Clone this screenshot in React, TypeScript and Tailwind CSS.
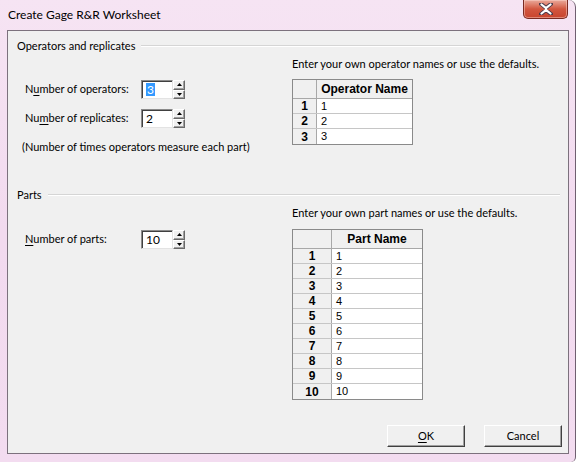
import React from "react";

const ui = "font-['Segoe_UI','Lato','DejaVu_Sans',sans-serif]";
const gridFont = "font-['Tahoma','Liberation_Sans','DejaVu_Sans',sans-serif]";

function Mnemonic({ before, ch, after }: { before: string; ch: string; after: string }) {
  return (
    <span className="whitespace-nowrap">
      {before}
      <span className="underline underline-offset-2">{ch}</span>
      {after}
    </span>
  );
}

function Arrow({ up }: { up: boolean }) {
  return (
    <svg width="5" height="3" viewBox="0 0 5 3" className="block">
      {up ? <path d="M0 3 L2.5 0 L5 3 Z" fill="#000" /> : <path d="M0 0 L2.5 3 L5 0 Z" fill="#000" />}
    </svg>
  );
}

function SpinButton({ up }: { up: boolean }) {
  return (
    <div className="flex-1 flex items-center justify-center bg-[#f0f0f0] border-t border-l border-t-white border-l-white border-r border-b border-r-[#696969] border-b-[#696969] shadow-[inset_-1px_-1px_0_#a0a0a0]">
      <Arrow up={up} />
    </div>
  );
}

function Spin({ value, selected }: { value: string; selected?: boolean }) {
  return (
    <div className="flex h-[19px]">
      <div className="w-[32px] h-[19px] bg-white border border-t-[#8a8a8a] border-l-[#8a8a8a] border-r-[#e3e3e3] border-b-[#e3e3e3] shadow-[inset_1px_1px_0_#404040] flex items-center pl-[4px] text-[12px]">
        {selected ? (
          <span className="bg-[#3399ff] text-white leading-[13px] px-[1px]">{value}</span>
        ) : (
          <span className="leading-[13px]">{value}</span>
        )}
      </div>
      <div className="w-[12px] h-[19px] flex flex-col">
        <SpinButton up />
        <SpinButton up={false} />
      </div>
    </div>
  );
}

function GroupHeader({ title }: { title: string }) {
  return (
    <div className="h-[16px] flex items-center pl-[9px] pr-[8px]">
      <span className="leading-[16px] whitespace-nowrap">{title}</span>
      <div className="flex-1 ml-[6px] h-[2px] border-t border-b border-t-[#d5d5d5] border-b-white" />
    </div>
  );
}

function NameGrid({
  header,
  rows,
  keyClass,
  valClass,
}: {
  header: string;
  rows: string[];
  keyClass: string;
  valClass: string;
}) {
  return (
    <div className={`w-fit border border-[#8a8a8a] bg-white ${gridFont} text-[11px]`}>
      <div className="flex h-[19px] border-b border-[#a8a8a8]">
        <div className={`${keyClass} bg-[#f0f0f0] border-r border-[#a8a8a8]`} />
        <div className={`${valClass} bg-[#f0f0f0] flex items-center justify-center font-bold text-[12px]`}>
          {header}
        </div>
      </div>
      {rows.map((r, i) => (
        <div
          key={r}
          className={`flex h-[15px] ${i < rows.length - 1 ? "border-b border-[#c6c6c6]" : ""}`}
        >
          <div
            className={`${keyClass} bg-[#f0f0f0] border-r border-[#a8a8a8] flex items-center justify-center font-bold text-[12px]`}
          >
            {i + 1}
          </div>
          <div className={`${valClass} flex items-center pl-[4px] text-[11px]`}>{r}</div>
        </div>
      ))}
    </div>
  );
}

function ClassicButton({ children }: { children: React.ReactNode }) {
  return (
    <div className="w-[78px] h-[22px] bg-[#f0f0f0] border-t border-l border-t-white border-l-white border-r border-b border-r-[#404040] border-b-[#404040] shadow-[inset_-1px_-1px_0_#a0a0a0] flex items-center justify-center">
      {children}
    </div>
  );
}

export default function App() {
  const partNames = ["1", "2", "3", "4", "5", "6", "7", "8", "9", "10"];
  return (
    <div
      className={`w-[576px] h-[462px] overflow-hidden bg-gradient-to-b from-[#f6e4f3] via-[#f2daef] to-[#f3dcf0] border-r border-[#6f5f70] rounded-tr-[7px] rounded-br-[5px] flex flex-col text-[11px] text-black ${ui}`}
    >
      {/* caption bar */}
      <div className="h-[30px] flex items-start">
        <div className="pl-[8px] pt-[7px] leading-[16px] text-[12px] flex-1 whitespace-nowrap">Create Gage R&amp;R Worksheet</div>
        <div className="mr-[7px] w-[45px] h-[19px] rounded-b-[5px] border border-t-0 border-[#7a2a22] bg-gradient-to-b from-[#e9a99b] via-[#d2563f] to-[#c8442e] flex items-center justify-center shadow-[inset_0_0_0_1px_rgba(255,220,210,0.45)]">
          <svg width="14" height="12" viewBox="0 0 14 12">
            <path
              d="M2 1 L7 5 L12 1 M2 11 L7 7 L12 11"
              stroke="#4a3a4a"
              strokeWidth="4"
              strokeLinecap="round"
              fill="none"
            />
            <path
              d="M2.5 1.5 L7 5.2 L11.5 1.5 M2.5 10.5 L7 6.8 L11.5 10.5 M7 5.2 L7 6.8"
              stroke="#ffffff"
              strokeWidth="2.2"
              strokeLinecap="round"
              fill="none"
            />
          </svg>
        </div>
      </div>

      {/* client area */}
      <div className="ml-[7px] mr-[6px] h-[424px] bg-[#f0f0f0] border border-[#7c717d] flex flex-col">
        {/* operators and replicates */}
        <div className="mt-[7px]">
          <GroupHeader title="Operators and replicates" />
        </div>
        <div className="h-[133px] flex">
          <div className="w-[284px] shrink-0 pl-[17px] pt-[26px] flex flex-col">
            <div className="flex items-center h-[19px]">
              <div className="w-[116px]">
                <Mnemonic before="N" ch="u" after="mber of operators:" />
              </div>
              <Spin value="3" selected />
            </div>
            <div className="flex items-center h-[19px] mt-[10px]">
              <div className="w-[116px]">
                <Mnemonic before="Nu" ch="m" after="ber of replicates:" />
              </div>
              <Spin value="2" />
            </div>
            <div className="mt-[11px] -ml-[3px] leading-[16px] whitespace-nowrap">
              (Number of times operators measure each part)
            </div>
          </div>
          <div className="pt-[2px] flex flex-col">
            <div className="leading-[16px] whitespace-nowrap">Enter your own operator names or use the defaults.</div>
            <div className="mt-[7px]">
              <NameGrid header="Operator Name" rows={["1", "2", "3"]} keyClass="w-[24px]" valClass="w-[95px]" />
            </div>
          </div>
        </div>

        {/* parts */}
        <GroupHeader title="Parts" />
        <div className="flex">
          <div className="w-[284px] shrink-0 pl-[17px] pt-[27px]">
            <div className="flex items-center h-[19px]">
              <div className="w-[116px]">
                <Mnemonic before="" ch="N" after="umber of parts:" />
              </div>
              <Spin value="10" />
            </div>
          </div>
          <div className="pt-[2px] flex flex-col">
            <div className="leading-[16px] whitespace-nowrap">Enter your own part names or use the defaults.</div>
            <div className="mt-[8px]">
              <NameGrid header="Part Name" rows={partNames} keyClass="w-[39px]" valClass="w-[90px]" />
            </div>
          </div>
        </div>

        {/* dialog buttons */}
        <div className="mt-auto flex justify-end gap-[19px] pr-[6px] pb-[6px]">
          <ClassicButton>
            <Mnemonic before="" ch="O" after="K" />
          </ClassicButton>
          <ClassicButton>Cancel</ClassicButton>
        </div>
      </div>
    </div>
  );
}
